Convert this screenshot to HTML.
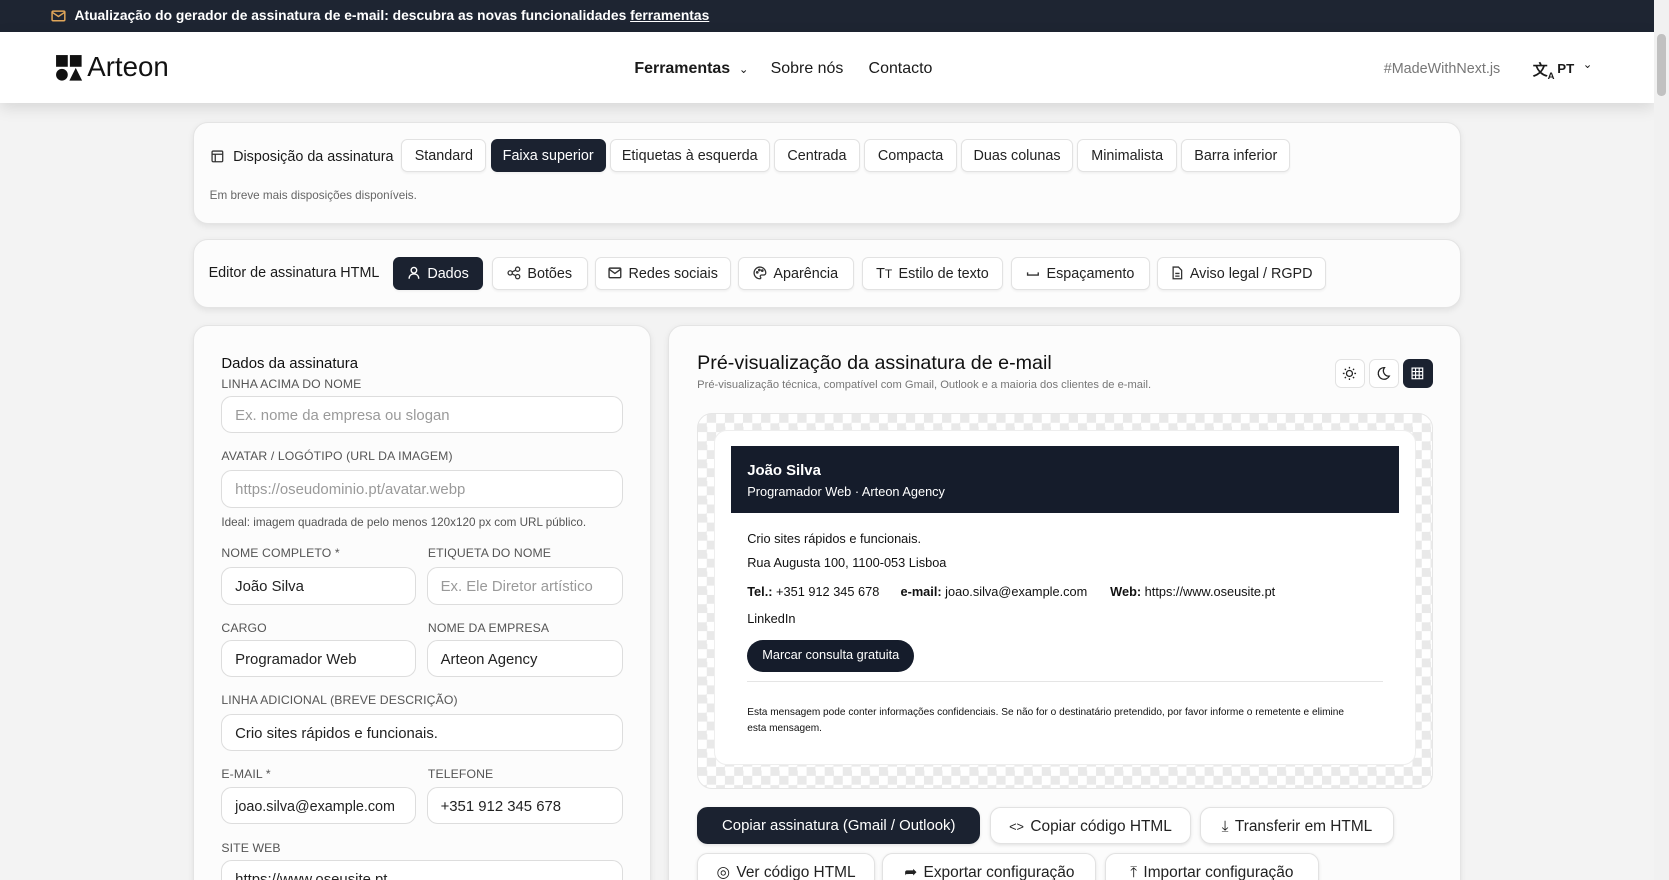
<!DOCTYPE html>
<html><head><meta charset="utf-8"><style>
*{box-sizing:border-box;margin:0;padding:0}
html,body{width:1669px;height:880px;overflow:hidden;background:#f3f3f3}
#w{zoom:1.0644;position:relative;width:1568px;height:827px;font-family:"Liberation Sans",sans-serif;color:#1a1a1a}
.a{position:absolute}
.bar{left:0;top:0;width:1554px;height:30px;background:#1e2532;color:#fff;font-size:13px;font-weight:bold;line-height:30px;padding-left:70px}
.bar u{text-decoration:underline}
.hdr{left:0;top:30px;width:1554px;height:67px;background:#fff;box-shadow:0 4px 14px rgba(0,0,0,.12)}
.sb{left:1554px;top:0;width:14px;height:827px;background:#f1f1f1}
.card{background:#fcfcfc;border:1px solid #e4e4e4;border-radius:14px;box-shadow:0 2px 6px rgba(0,0,0,.08)}
.btn{position:absolute;height:31px;border:1px solid #e2e2e2;border-radius:6px;background:#fff;font-size:13.5px;line-height:31px;text-align:center;color:#222;box-shadow:0 1px 2px rgba(0,0,0,.05);white-space:nowrap}
.btn.d{background:#1b2230;color:#fff;border-color:#1b2230}
.btn svg{vertical-align:-2px;margin-right:6px}
.lbl{position:absolute;font-size:11.5px;color:#555;letter-spacing:.1px}
.in{position:absolute;height:35px;border:1px solid #ddd;border-radius:10px;background:#fff;font-size:14px;line-height:36px;padding-left:12px;color:#222}
.in.p{color:#9a9a9a}
.ck{background-color:#fff;background-image:conic-gradient(#e9e9e9 25%,#fff 0 50%,#e9e9e9 0 75%,#fff 0);background-size:17px 17px}
.sg{font-family:"Liberation Sans",sans-serif;font-size:12px;color:#111}
.ab{position:absolute;height:35px;border:1px solid #e2e2e2;border-radius:10px;background:#fff;font-size:14.5px;line-height:35px;text-align:center;color:#222;box-shadow:0 1px 3px rgba(0,0,0,.1);white-space:nowrap}
</style></head><body><div id="w">
<div class="a bar">Atualização do gerador de assinatura de e-mail: descubra as novas funcionalidades <u>ferramentas</u></div>
<svg class="a" style="left:48px;top:8px" width="14" height="14" viewBox="0 0 14 14" fill="none" stroke="#e0a65a" stroke-width="1.4"><rect x="1" y="2" width="12" height="9" rx="1"/><path d="M1 3l6 4 6-4"/></svg>
<div class="a hdr"></div>
<svg class="a" style="left:52px;top:51px" width="26" height="26" viewBox="0 0 26 26" fill="#111"><rect x="1" y="1" width="11" height="11"/><rect x="14" y="1" width="11" height="11"/><circle cx="6.5" cy="19.5" r="5.5"/><path d="M19.5 13l6 12h-12z"/></svg>
<div class="a" style="left:82px;top:48px;font-size:26px;color:#111">Arteon</div>
<div class="a" style="left:596px;top:56px;font-size:15px;font-weight:bold">Ferramentas <span style="font-weight:normal;font-size:11px;margin-left:4px">&#8964;</span></div>
<div class="a" style="left:724px;top:56px;font-size:15px">Sobre nós</div>
<div class="a" style="left:816px;top:56px;font-size:15px">Contacto</div>
<div class="a" style="left:1300px;top:57px;font-size:13.5px;color:#777">#MadeWithNext.js</div>
<div class="a" style="left:1440px;top:55px;font-size:14px;font-weight:bold">文<sub style="font-size:9px">A</sub></div>
<div class="a" style="left:1463px;top:57px;font-size:12.5px;font-weight:bold">PT</div>
<div class="a" style="left:1487px;top:54px;font-size:11px">&#8964;</div>
<div class="a sb"></div><div class="a" style="left:1557px;top:32px;width:8px;height:58px;border-radius:4px;background:#c1c1c1"></div>

<div class="a card" style="left:181px;top:115px;width:1192px;height:95px"></div>
<svg class="a" style="left:198px;top:141px" width="12" height="12" viewBox="0 0 12 12" fill="none" stroke="#333" stroke-width="1.2"><rect x="1" y="1" width="10" height="10" rx="1"/><path d="M1 4h10M4 4v7"/></svg>
<div class="a" style="left:219px;top:140px;font-size:13.5px">Disposição da assinatura</div>
<div class="btn" style="left:377px;top:131px;width:80px">Standard</div>
<div class="btn d" style="left:461px;top:131px;width:108px">Faixa superior</div>
<div class="btn" style="left:573px;top:131px;width:150px">Etiquetas à esquerda</div>
<div class="btn" style="left:727px;top:131px;width:81px">Centrada</div>
<div class="btn" style="left:812px;top:131px;width:87px">Compacta</div>
<div class="btn" style="left:903px;top:131px;width:105px">Duas colunas</div>
<div class="btn" style="left:1012px;top:131px;width:94px">Minimalista</div>
<div class="btn" style="left:1110px;top:131px;width:102px">Barra inferior</div>
<div class="a" style="left:197px;top:178px;font-size:11px;color:#666">Em breve mais disposições disponíveis.</div>

<div class="a card" style="left:181px;top:225px;width:1192px;height:64px"></div>
<div class="a" style="left:196px;top:249px;font-size:13.5px">Editor de assinatura HTML</div>
<div class="btn d" style="left:369px;top:241px;width:85px"><svg width="13" height="13" viewBox="0 0 13 13" fill="none" stroke="#fff" stroke-width="1.3"><circle cx="6.5" cy="4" r="2.6"/><path d="M2 12c0-3 2-4.5 4.5-4.5S11 9 11 12"/></svg>Dados</div>
<div class="btn" style="left:462px;top:241px;width:90px"><svg width="13" height="13" viewBox="0 0 13 13" fill="none" stroke="#333" stroke-width="1.2"><circle cx="3" cy="6.5" r="2"/><circle cx="10" cy="3" r="2"/><circle cx="10" cy="10" r="2"/><path d="M5 5.5l3-1.5M5 7.5l3 1.5"/></svg>Botões</div>
<div class="btn" style="left:559px;top:241px;width:128px"><svg width="13" height="13" viewBox="0 0 13 13" fill="none" stroke="#333" stroke-width="1.3"><rect x="1" y="2" width="11" height="9" rx="1"/><path d="M1 3l5.5 4L12 3"/></svg>Redes sociais</div>
<div class="btn" style="left:693px;top:241px;width:109px"><svg width="13" height="13" viewBox="0 0 13 13" fill="none" stroke="#333" stroke-width="1.2"><path d="M6.5 1a5.5 5.5 0 100 11c1 0 1-1 .5-1.7-.5-.8 0-1.8 1-1.8H10a2 2 0 002-2C12 3.5 9.5 1 6.5 1z"/><circle cx="4" cy="6" r=".7"/><circle cx="6" cy="3.8" r=".7"/><circle cx="8.7" cy="4.3" r=".7"/></svg>Aparência</div>
<div class="btn" style="left:810px;top:241px;width:132px"><span style="margin-right:6px">T<small>T</small></span>Estilo de texto</div>
<div class="btn" style="left:950px;top:241px;width:130px"><svg width="13" height="13" viewBox="0 0 13 13" fill="none" stroke="#333" stroke-width="1.3"><path d="M1.5 6v2.5h10V6"/></svg>Espaçamento</div>
<div class="btn" style="left:1087px;top:241px;width:159px"><svg width="12" height="13" viewBox="0 0 12 13" fill="none" stroke="#333" stroke-width="1.2"><path d="M2 1h5l3 3v8H2zM4 7h4M4 9.5h4"/></svg>Aviso legal / RGPD</div>

<div class="a card" style="left:181px;top:305px;width:431px;height:560px"></div>
<div class="a" style="left:208px;top:334px;font-size:14px;color:#111">Dados da assinatura</div>
<div class="lbl" style="left:208px;top:354px">LINHA ACIMA DO NOME</div>
<div class="in p" style="left:208px;top:372px;width:377px">Ex. nome da empresa ou slogan</div>
<div class="lbl" style="left:208px;top:422px">AVATAR / LOGÓTIPO (URL DA IMAGEM)</div>
<div class="in p" style="left:208px;top:442px;width:377px">https://oseudominio.pt/avatar.webp</div>
<div class="a" style="left:208px;top:485px;font-size:11px;color:#555">Ideal: imagem quadrada de pelo menos 120x120 px com URL público.</div>
<div class="lbl" style="left:208px;top:513px">NOME COMPLETO *</div>
<div class="lbl" style="left:402px;top:513px">ETIQUETA DO NOME</div>
<div class="in" style="left:208px;top:533px;width:183px">João Silva</div>
<div class="in p" style="left:401px;top:533px;width:184px">Ex. Ele  Diretor artístico</div>
<div class="lbl" style="left:208px;top:583px">CARGO</div>
<div class="lbl" style="left:402px;top:583px">NOME DA EMPRESA</div>
<div class="in" style="left:208px;top:601px;width:183px">Programador Web</div>
<div class="in" style="left:401px;top:601px;width:184px">Arteon Agency</div>
<div class="lbl" style="left:208px;top:651px">LINHA ADICIONAL (BREVE DESCRIÇÃO)</div>
<div class="in" style="left:208px;top:671px;width:377px">Crio sites rápidos e funcionais.</div>
<div class="lbl" style="left:208px;top:721px">E-MAIL *</div>
<div class="lbl" style="left:402px;top:721px">TELEFONE</div>
<div class="in" style="left:208px;top:739px;width:183px;font-size:13.5px">joao.silva@example.com</div>
<div class="in" style="left:401px;top:739px;width:184px">+351 912 345 678</div>
<div class="lbl" style="left:208px;top:790px">SITE WEB</div>
<div class="in" style="left:208px;top:808px;width:377px">https://www.oseusite.pt</div>

<div class="a card" style="left:628px;top:305px;width:745px;height:560px"></div>
<div class="a" style="left:655px;top:331px;font-size:18.5px;color:#111">Pré-visualização da assinatura de e-mail</div>
<div class="a" style="left:655px;top:356px;font-size:10.5px;color:#777">Pré-visualização técnica, compatível com Gmail, Outlook e a maioria dos clientes de e-mail.</div>
<div class="a" style="left:1254px;top:337px;width:28px;height:28px;border:1px solid #e2e2e2;border-radius:6px;background:#fff"><svg style="margin:6px" width="14" height="14" viewBox="0 0 14 14" fill="none" stroke="#222" stroke-width="1.2"><circle cx="7" cy="7" r="2.8"/><path d="M7 .8v1.6M7 11.6v1.6M.8 7h1.6M11.6 7h1.6M2.6 2.6l1.1 1.1M10.3 10.3l1.1 1.1M2.6 11.4l1.1-1.1M10.3 3.7l1.1-1.1"/></svg></div>
<div class="a" style="left:1286px;top:337px;width:28px;height:28px;border:1px solid #e2e2e2;border-radius:6px;background:#fff"><svg style="margin:6px" width="14" height="14" viewBox="0 0 14 14" fill="none" stroke="#222" stroke-width="1.2"><path d="M8 1.5a5.5 5.5 0 104.5 8A5 5 0 018 1.5z"/></svg></div>
<div class="a" style="left:1318px;top:337px;width:28px;height:28px;border-radius:6px;background:#1b2230"><svg style="margin:8px" width="12" height="12" viewBox="0 0 12 12" fill="none" stroke="#fff" stroke-width="1.1"><rect x="1" y="1" width="10" height="10"/><path d="M1 4.3h10M1 7.7h10M4.3 1v10M7.7 1v10"/></svg></div>
<div class="a ck" style="left:655px;top:388px;width:691px;height:353px;border-radius:14px;border:1px solid #e6e6e6"></div>
<div class="a" style="left:671px;top:404px;width:659px;height:315px;border-radius:12px;background:#fff;border:1px solid #eee"></div>
<div class="a" style="left:687px;top:419px;width:627px;height:63px;background:#151c2b"></div>
<div class="a sg" style="left:702px;top:435px;color:#fff;font-size:14px;font-weight:bold">João Silva</div>
<div class="a sg" style="left:702px;top:455px;color:#fff">Programador Web · Arteon Agency</div>
<div class="a sg" style="left:702px;top:499px">Crio sites rápidos e funcionais.</div>
<div class="a sg" style="left:702px;top:521px">Rua Augusta 100, 1100-053 Lisboa</div>
<div class="a sg" style="left:702px;top:549px"><b>Tel.:</b> +351 912 345 678</div>
<div class="a sg" style="left:846px;top:549px"><b>e-mail:</b> joao.silva@example.com</div>
<div class="a sg" style="left:1043px;top:549px"><b>Web:</b> https://www.oseusite.pt</div>
<div class="a sg" style="left:702px;top:574px">LinkedIn</div>
<div class="a sg" style="left:702px;top:601px;width:157px;height:30px;border-radius:15px;background:#151c2b;color:#fff;text-align:center;line-height:29px">Marcar consulta gratuita</div>
<div class="a" style="left:702px;top:640px;width:597px;height:1px;background:#e5e5e5"></div>
<div class="a sg" style="left:702px;top:662px;font-size:9.5px;line-height:15px;width:570px">Esta mensagem pode conter informações confidenciais. Se não for o destinatário pretendido, por favor informe o remetente e elimine esta mensagem.</div>

<div class="ab" style="left:655px;top:758px;width:266px;background:#1b2230;color:#fff;border-color:#1b2230;font-size:14px">Copiar assinatura (Gmail / Outlook)</div>
<div class="ab" style="left:930px;top:758px;width:189px"><span style="margin-right:6px;font-size:12px">&lt;&gt;</span>Copiar código HTML</div>
<div class="ab" style="left:1127px;top:758px;width:183px"><span style="margin-right:6px">⤓</span>Transferir em HTML</div>
<div class="ab" style="left:655px;top:801px;width:167px"><span style="margin-right:6px">◎</span>Ver código HTML</div>
<div class="ab" style="left:829px;top:801px;width:201px"><span style="margin-right:6px">➦</span>Exportar configuração</div>
<div class="ab" style="left:1038px;top:801px;width:201px"><span style="margin-right:6px">⤒</span>Importar configuração</div>
</div></body></html>
